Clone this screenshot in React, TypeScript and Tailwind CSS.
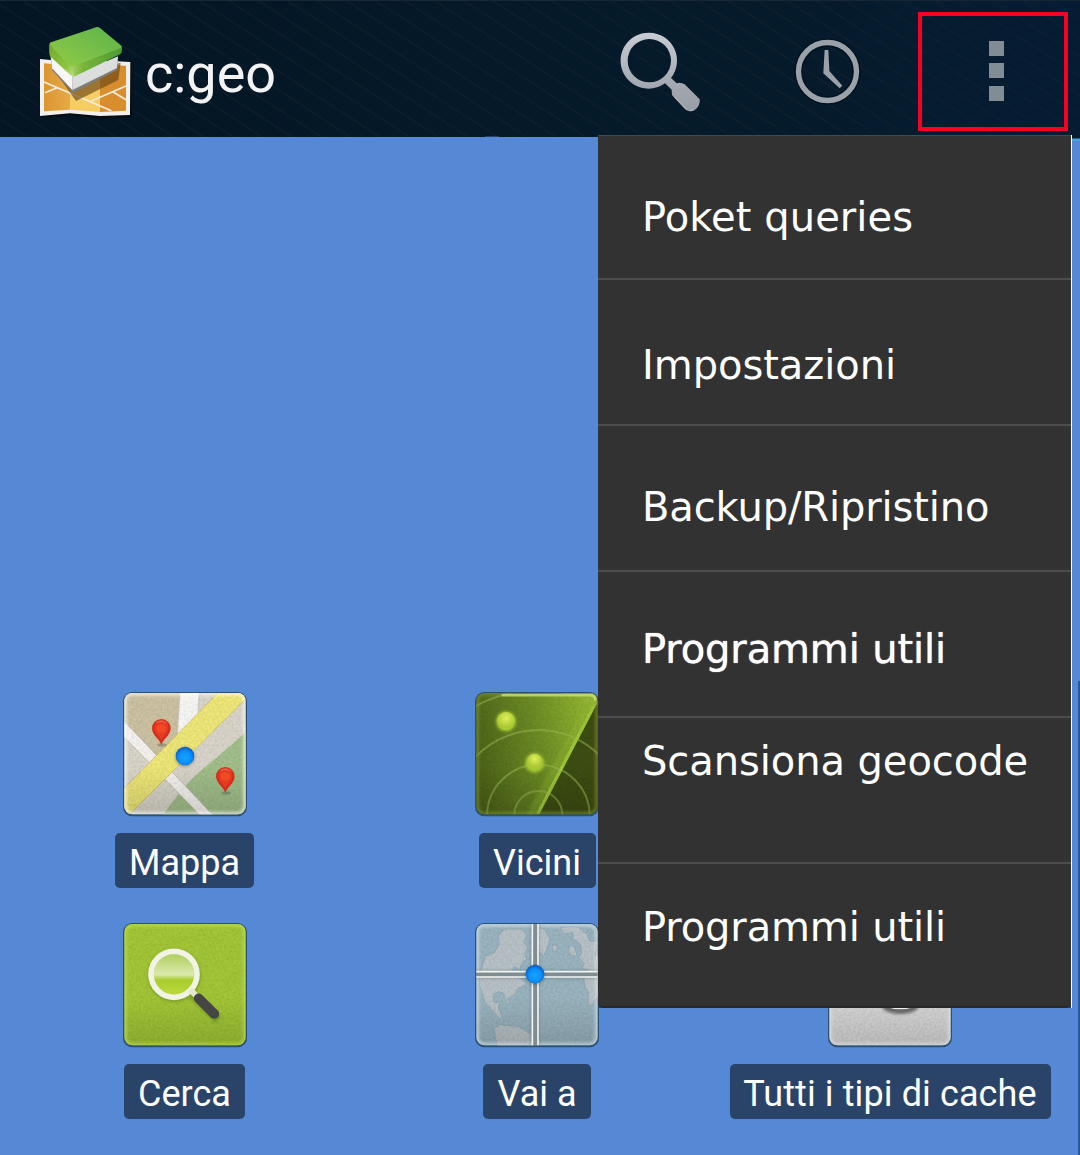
import type { ReactNode } from "react";

const menuItems = [
  { label: "Poket queries", cls: "h-[144px] pt-[57px] tracking-[0.06px]" },
  { label: "Impostazioni", cls: "h-[146px] pt-[61px] tracking-[-0.06px]" },
  { label: "Backup/Ripristino", cls: "h-[146px] pt-[57px] tracking-[-0.12px]" },
  { label: "Programmi utili", cls: "h-[146px] pt-[53px] tracking-[-0.13px] [text-shadow:0_0_1px_#ffffff]" },
  { label: "Scansiona geocode", cls: "h-[146px] pt-[19px] tracking-[-0.07px]" },
  { label: "Programmi utili", cls: "h-[142px] pt-[39px] tracking-[-0.13px]" },
];

function Logo() {
  return (
    <svg className="h-[100px] w-[100px] shrink-0" viewBox="111 69 300 300">
      <defs>
        <linearGradient id="lg-top" x1="0" y1="1" x2="1" y2="0">
          <stop offset="0" stopColor="#94cb47" />
          <stop offset="1" stopColor="#5bb34a" />
        </linearGradient>
        <linearGradient id="lg-left" x1="0" y1="0" x2="1" y2="1">
          <stop offset="0" stopColor="#6fa82c" />
          <stop offset="0.7" stopColor="#8fc440" />
          <stop offset="1" stopColor="#c3e288" />
        </linearGradient>
        <linearGradient id="lg-right" x1="0" y1="0" x2="1" y2="0">
          <stop offset="0" stopColor="#a9d463" />
          <stop offset="0.25" stopColor="#79b53a" />
          <stop offset="1" stopColor="#4b9a33" />
        </linearGradient>
        <linearGradient id="lg-o" x1="0" y1="0" x2="1" y2="0">
          <stop offset="0" stopColor="#dc9530" />
          <stop offset="1" stopColor="#e5aa48" />
        </linearGradient>
        <filter id="lg-b" x="-20%" y="-20%" width="140%" height="140%">
          <feGaussianBlur stdDeviation="3" />
        </filter>
      </defs>
      <path d="M124 182L394 188L394 351L298 352L212 344L124 352Z" fill="#000" opacity="0.7" filter="url(#lg-b)" />
      <path d="M120 177L160 181L350 184L391 186L390 345L300 348L210 340L120 348Z" fill="#f1f0ec" />
      <path d="M132 190L210 198V329L132 334Z" fill="url(#lg-o)" />
      <path d="M210 198L300 190V336L210 329Z" fill="#f6cc65" />
      <path d="M300 190L378 198V332L300 336Z" fill="#d98e2d" />
      <path d="M132 246L334 332M135 278L170 264M274 303L378 258M338 275L378 299" stroke="#f7eedc" strokeWidth="5" fill="none" />
      <path d="M158 205L228 303L355 240L362 188L218 220Z" fill="#684716" opacity="0.65" />
      <path d="M151 165L220 228L354 170L351 210L219 279L156 210Z" fill="#7d7d7d" />
      <path d="M152 166L217 226L217 270L156 205Z" fill="#f6f6f6" />
      <path d="M217 228L354 169L351 204L217 270Z" fill="#dcdddd" />
      <path d="M210 196L364 138Q367 142 366 150Q365 160 360 163L228 227Q222 231 216 227Z" fill="url(#lg-right)" />
      <path d="M147 132L214 194L222 229Q218 231 212 226L153 172Q148 167 148 160Z" fill="url(#lg-left)" />
      <path d="M153 127L284 83Q292 79 300 84L364 137Q367 141 361 144L222 198Q213 202 206 196L151 136Q146 130 153 127Z" fill="url(#lg-top)" />
    </svg>
  );
}

function SearchIcon() {
  return (
    <svg className="h-[100px] w-[100px]" viewBox="29 69 300 300">
      <defs>
        <linearGradient id="s-g" x1="0" y1="0" x2="0" y2="1">
          <stop offset="0" stopColor="#c9ccd2" />
          <stop offset="0.7" stopColor="#a2a7af" />
          <stop offset="1" stopColor="#989ea6" />
        </linearGradient>
      </defs>
      <path
        fillRule="evenodd"
        fill="url(#s-g)"
        d="M147 98A84 84 0 1 0 194 250L214 269L215 285L252 325Q266 339 283 330Q301 318 298 298L253 253Q240 245 229 250L212 234A84 84 0 0 0 147 98ZM147 117A65 65 0 1 1 147 247A65 65 0 1 1 147 117Z"
      />
      <path d="M222 290L257 328Q268 336 281 328" fill="none" stroke="#c5c8cd" strokeWidth="4" opacity="0.5" />
    </svg>
  );
}

function ClockIcon() {
  return (
    <svg className="h-[70px] w-[70px]" viewBox="578 110 210 210">
      <circle cx="681.500" cy="213.500" r="87" fill="none" stroke="#03131f" strokeWidth="26" />
      <circle cx="681.500" cy="213.500" r="87" fill="none" stroke="#9ba1a9" strokeWidth="16" />
      <path d="M673 149H684L687 212L726 256L718 264L669 219Z" fill="#9ba1a9" />
    </svg>
  );
}

function Tile({ id, viewBox, x, y, fill, children }: { id: string; viewBox: string; x: number; y: number; fill: string; children: ReactNode }) {
  return (
    <svg className="h-[126px] w-[126px] shrink-0" viewBox={viewBox}>
      <defs>
        <clipPath id={`${id}-c`}>
          <rect x={x + 7} y={y + 6} width="364" height="364" rx="24" />
        </clipPath>
        <filter id={`${id}-n`} x="0" y="0" width="100%" height="100%">
          <feTurbulence type="fractalNoise" baseFrequency="0.14" numOctaves="2" />
          <feColorMatrix values="0 0 0 0 0  0 0 0 0 0  0 0 0 0 0  0.500 0 0 0 -0.15" />
        </filter>
        <filter id={`${id}-b`} x="-20%" y="-20%" width="140%" height="140%">
          <feGaussianBlur stdDeviation="5" />
        </filter>
        <filter id={`${id}-h`} x="-10%" y="-10%" width="120%" height="120%">
          <feGaussianBlur stdDeviation="1.500" />
        </filter>
        <linearGradient id={`${id}-s`} x1="0" y1="0" x2="0" y2="1">
          <stop offset="0.6" stopColor="#000" stopOpacity="0" />
          <stop offset="1" stopColor="#000" stopOpacity="0.14" />
        </linearGradient>
      </defs>
      <rect x={x + 3} y={y + 3} width="372" height="373" rx="28" fill="#254a62" opacity="0.85" filter={`url(#${id}-h)`} />
      <g clipPath={`url(#${id}-c)`}>
        <rect x={x} y={y} width="378" height="378" fill={fill} />
        {children}
      </g>
    </svg>
  );
}

function Shade({ id, x, y, edge }: { id: string; x: number; y: number; edge: string }) {
  return (
    <>
      <rect x={x} y={y} width="378" height="378" fill={`url(#${id}-s)`} />
      <rect x={x} y={y} width="378" height="378" filter={`url(#${id}-n)`} opacity="0.3" />
      <rect x={x + 9} y={y + 8} width="360" height="360" rx="22" fill="none" stroke={edge} strokeWidth="12" opacity="0.6" filter={`url(#${id}-b)`} />
    </>
  );
}

function BlueDot({ id, cx, cy }: { id: string; cx: number; cy: number }) {
  return (
    <>
      <radialGradient id={`${id}-dot`} cx="0.5" cy="0.58" r="0.55">
        <stop offset="0" stopColor="#16a4ff" />
        <stop offset="0.6" stopColor="#0a90fb" />
        <stop offset="1" stopColor="#0b5cc4" />
      </radialGradient>
      <circle cx={cx} cy={cy + 3} r="29" fill="#333" opacity="0.4" filter={`url(#${id}-b)`} />
      <circle cx={cx} cy={cy} r="28" fill={`url(#${id}-dot)`} />
    </>
  );
}

function Pin({ x, y }: { x: number; y: number }) {
  return (
    <g transform={`translate(${x} ${y})`} filter="url(#map-h)">
      <ellipse cx="2" cy="78" rx="14" ry="5" fill="#555" opacity="0.4" />
      <path d="M0 79C-4 60 -28 50 -28 28A28 28 0 0 1 28 28C28 50 4 60 0 79Z" fill="#d22e1a" />
      <path d="M0 66C-4 52 -21 44 -21 25A21 19 0 0 1 21 25C21 44 4 52 0 66Z" fill="#e53a22" />
      <ellipse cx="0" cy="29" rx="14" ry="13" fill="#f04b20" />
      <path d="M-20 14Q0 -6 20 14Q0 4 -20 14Z" fill="#ff8c78" opacity="0.5" />
    </g>
  );
}

function MapTile() {
  return (
    <Tile id="map" viewBox="36 33 378 378" x={36} y={33} fill="#dad6cb">
      <path d="M36 33H214L203 175L140 230L36 118Z" fill="#cdc2a3" />
      <path d="M414 150V411H155Q230 300 300 250Q370 190 414 150Z" fill="#a3c08c" />
      <path d="M210 33H268L262 130L201 185Z" fill="#f8f8f6" stroke="#c5bfb0" strokeWidth="2" />
      <path d="M30 110L314 411H275L30 158Z" fill="#f5f4f1" stroke="#b5b2a2" strokeWidth="2" />
      <path d="M30 338L330 33H414V50L50 411H30Z" fill="#f0e878" stroke="#c4bc65" strokeWidth="2" />
      <Shade id="map" x={36} y={33} edge="#ffffff" />
      <Pin x={154} y={117} />
      <Pin x={346} y={261} />
      <BlueDot id="map" cx={225} cy={228} />
    </Tile>
  );
}

function RadarTile() {
  return (
    <Tile id="radar" viewBox="27 33 378 378" x={27} y={33} fill="#3d4e12">
      <defs>
        <linearGradient id="radar-g" x1="0" y1="0.5" x2="1" y2="0.3">
          <stop offset="0" stopColor="#4b6118" />
          <stop offset="0.55" stopColor="#708f26" />
          <stop offset="1" stopColor="#99bb33" />
        </linearGradient>
        <radialGradient id="radar-d" cx="0.5" cy="0.35">
          <stop offset="0" stopColor="#e3f05a" />
          <stop offset="1" stopColor="#a9c934" />
        </radialGradient>
      </defs>
      <path d="M27 33H405L216 411H27Z" fill="url(#radar-g)" />
      <path d="M395 60L210 411H180L340 110Z" fill="#8db52e" opacity="0.4" filter="url(#radar-b)" />
      <g fill="none" stroke="#9db853" strokeWidth="6" opacity="0.55" filter="url(#radar-h)">
        <circle cx="220" cy="405" r="72" />
        <circle cx="220" cy="408" r="154" />
        <circle cx="220" cy="410" r="260" />
        <circle cx="220" cy="420" r="390" />
      </g>
      <path d="M395 62L218 402" stroke="#a0c838" strokeWidth="10" filter="url(#radar-h)" />
      <Shade id="radar" x={27} y={33} edge="#7d9436" />
      <path d="M110 45H376Q389 46 393 62" fill="none" stroke="#d1e778" strokeWidth="9" opacity="0.75" filter="url(#radar-h)" />
      <circle cx="123" cy="124" r="30" fill="#a6c833" filter="url(#radar-b)" />
      <circle cx="123" cy="123" r="27" fill="url(#radar-d)" filter="url(#radar-h)" />
      <circle cx="209" cy="249" r="29" fill="#a6c833" filter="url(#radar-b)" />
      <circle cx="209" cy="244" r="23" fill="url(#radar-d)" filter="url(#radar-h)" />
    </Tile>
  );
}

function SearchTile() {
  return (
    <Tile id="find" viewBox="36 21 378 378" x={36} y={21} fill="#a3c737">
      <defs>
        <linearGradient id="find-g" x1="0" y1="0" x2="0" y2="1">
          <stop offset="0" stopColor="#b0cf5c" />
          <stop offset="0.5" stopColor="#dbe9af" />
          <stop offset="0.64" stopColor="#a9cd2c" />
          <stop offset="1" stopColor="#bbda3c" />
        </linearGradient>
      </defs>
      <Shade id="find" x={36} y={21} edge="#c3e055" />
      <circle cx="193" cy="182" r="71" fill="none" stroke="#5f7d17" strokeWidth="16" opacity="0.5" filter="url(#find-b)" />
      <path d="M245 238L325 315" stroke="#5f7d17" strokeWidth="26" filter="url(#find-b)" opacity="0.5" />
      <g filter="url(#find-h)">
        <circle cx="192" cy="178" r="61" fill="url(#find-g)" />
        <circle cx="192" cy="178" r="69" fill="none" stroke="#f1f3e4" strokeWidth="17" />
        <path d="M240 224L264 247" stroke="#e4ead1" strokeWidth="17" />
        <path d="M266 250L313 297" stroke="#454545" strokeWidth="29" strokeLinecap="round" />
      </g>
    </Tile>
  );
}

function WorldTile() {
  return (
    <Tile id="world" viewBox="27 21 378 378" x={27} y={21} fill="#9ab5c0">
      <g fill="#b9c3c7" stroke="#8ca4af" strokeWidth="2">
        <path d="M50 158L60 125L88 113L103 88L100 62L118 42H170L185 60L177 82L188 97L178 118L186 132L170 145L164 166L148 154L140 172L130 180L166 190L186 208L158 220L148 240L128 249L133 268L122 262L117 235L100 229L86 238L84 258L94 264L105 257L100 278L112 306L105 313L80 285L60 260L44 212V170Z" />
        <path d="M86 342L104 329L160 335L202 360V399H98Z" />
        <path d="M218 37L240 44L255 72L246 102L235 126L225 112L215 120Z" />
        <path d="M263 88L278 94L272 111L263 104ZM313 91L327 95L337 124L317 121L312 106Z" />
        <path d="M284 38L300 58L322 51L326 73L346 86L351 112L342 128L358 145L352 160L371 164L356 184L360 215L370 230V268L382 272L390 253L405 240V128L390 119L397 80L374 79L366 57L337 35Z" />
      </g>
      <Shade id="world" x={27} y={21} edge="#dce8ef" />
      <path d="M210 26V392M30 178H398" stroke="#485963" strokeWidth="25" opacity="0.4" filter="url(#world-b)" />
      <path d="M210 26V392M30 178H398" stroke="#7f8c91" strokeWidth="12" />
      <path d="M202 26V392M219 26V392M30 170H398M30 186H398" stroke="#f3f5f5" strokeWidth="5" />
      <BlueDot id="world" cx={210} cy={177} />
    </Tile>
  );
}

function CacheTile() {
  return (
    <Tile id="cache" viewBox="321 -204 378 378" x={321} y={-204} fill="#d8d8d8">
      <Shade id="cache" x={321} y={-204} edge="#e3e3e3" />
      <ellipse cx="541" cy="49" rx="54" ry="23" fill="#666" filter="url(#cache-b)" />
      <ellipse cx="541" cy="38" rx="49" ry="20" fill="#eeeeee" filter="url(#cache-h)" />
    </Tile>
  );
}

function Shortcut({ label, pill, children }: { label: string; pill: string; children: ReactNode }) {
  return (
    <div className="flex flex-col items-center gap-4">
      {children}
      <span className={`flex h-[55px] items-center justify-center rounded-[5px] bg-[#2a4469] pt-1 text-[36px] leading-[48px] whitespace-nowrap text-white ${pill}`}>
        {label}
      </span>
    </div>
  );
}

export default function App() {
  return (
    <div className="relative flex h-[1155px] w-[1080px] flex-col overflow-hidden bg-[#5588d5] font-[Roboto,sans-serif]">
      <header className="flex h-[137px] shrink-0 items-start border-t border-[#172735] bg-[repeating-linear-gradient(33deg,transparent_0px,transparent_14px,#16232e99_15px,transparent_16px),linear-gradient(90deg,#041523,#051b2b_70%,#061c33)]">
        <div className="flex items-start pt-[22px] pl-[37px]">
          <Logo />
          <h1 className="ml-2 pt-[19px] text-[54px] leading-[64px] text-[#f3f3f3]">c:geo</h1>
        </div>
        <div className="ml-auto flex items-start">
          <div className="mt-[22px] mr-[83px]"><SearchIcon /></div>
          <div className="mt-[36px] mr-[55px]"><ClockIcon /></div>
          <div className="mt-[11px] mr-3 flex h-[119px] w-[150px] flex-col items-center gap-[8px] border-4 border-[#f80022] pt-[25px] pl-[7px]">
            <span className="h-[15px] w-[15px] bg-[#828c94]" />
            <span className="-mt-px h-[15px] w-[15px] bg-[#828c94]" />
            <span className="h-[15px] w-[15px] bg-[#828c94]" />
          </div>
        </div>
      </header>

      <main className="grid flex-1 grid-cols-[352px_352px_354px] content-end gap-y-[34px] pb-[36px] pl-[9px]">
        <Shortcut label="Mappa" pill="mr-px w-[139px]"><MapTile /></Shortcut>
        <Shortcut label="Vicini" pill="w-[117px]"><RadarTile /></Shortcut>
        <div />
        <Shortcut label="Cerca" pill="mr-px w-[121px]"><SearchTile /></Shortcut>
        <Shortcut label="Vai a" pill="w-[108px]"><WorldTile /></Shortcut>
        <Shortcut label="Tutti i tipi di cache" pill="w-[321px] tracking-[0.1px]"><CacheTile /></Shortcut>
      </main>

      <div className="absolute top-[136px] left-[485px] h-px w-[14px] bg-[#23436d]" />
      <div className="absolute top-[137px] right-0 h-[4px] w-2 border-t border-b-2 border-t-[#071c2c] border-b-[#45a5df] bg-[#23658a]" />
      <div className="absolute right-0 bottom-0 h-[474px] w-[2px] bg-[#2a579b]" />

      <div className="absolute top-[135px] left-[598px] h-[873px] w-[474px] border-r border-white bg-[#23436d]">
        <nav className="h-[873px] overflow-hidden rounded-b-[5px] border-t border-b-2 border-t-[#44494d] border-b-[#272727] bg-[#323232] font-['DejaVu_Sans',sans-serif] text-[40px] leading-[48px] text-white">
          {menuItems.map((item, i) => (
            <div key={i} className={`pl-[44px] whitespace-nowrap ${item.cls} ${i < 5 ? "border-b-2 border-[#4d4d4d]" : ""}`}>
              {item.label}
            </div>
          ))}
        </nav>
      </div>
    </div>
  );
}
